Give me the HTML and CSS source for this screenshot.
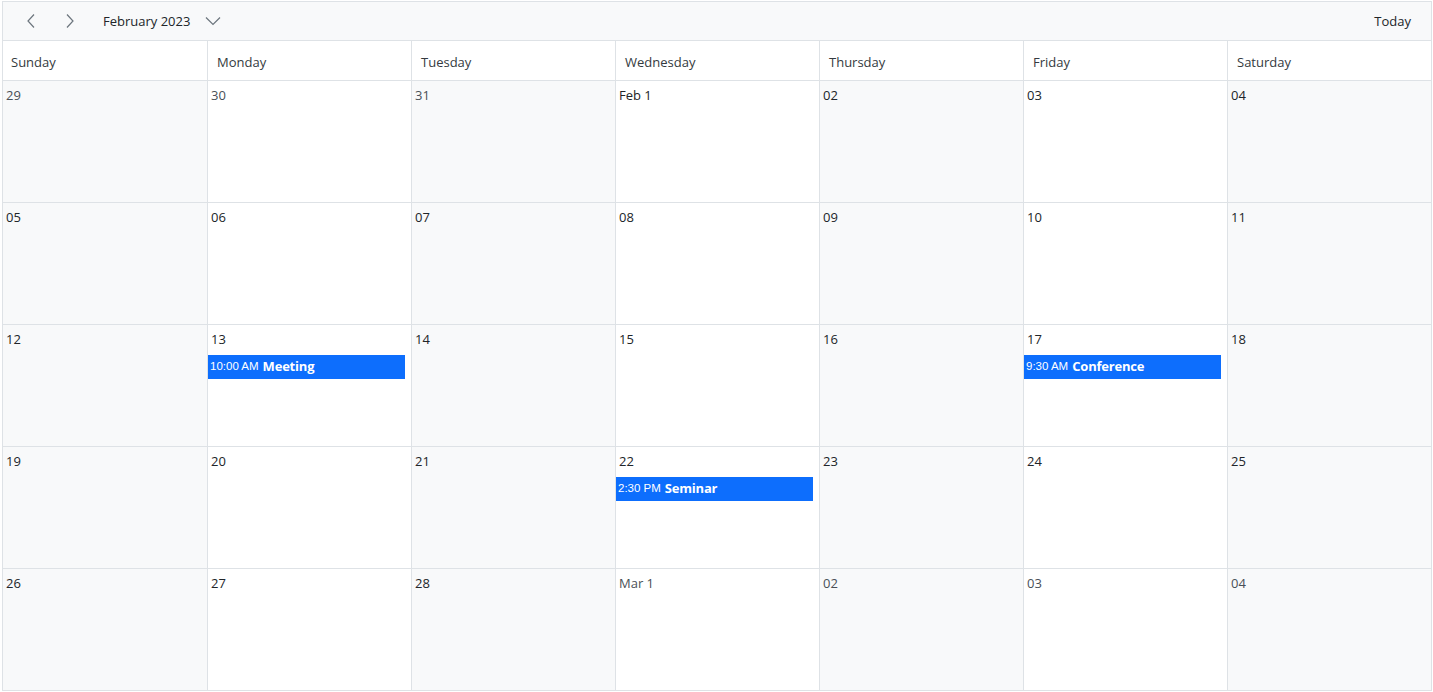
FILE: index.html
```html
<!DOCTYPE html>
<html lang="en">
<head>
<meta charset="utf-8">
<title>Calendar</title>
<link rel="stylesheet" href="styles.css">
</head>
<body>
<div class="calendar">
  <div class="toolbar">
    <button class="nav-btn" aria-label="Previous">
      <svg width="12" height="16" viewBox="0 0 12 16"><path d="M9 1.5 L3 8 L9 14.5" fill="none" stroke="#6c757d" stroke-width="1.2"/></svg>
    </button>
    <button class="nav-btn" aria-label="Next">
      <svg width="12" height="16" viewBox="0 0 12 16"><path d="M3 1.5 L9 8 L3 14.5" fill="none" stroke="#6c757d" stroke-width="1.2"/></svg>
    </button>
    <div class="title">February 2023</div>
    <button class="drop-btn" aria-label="Select month">
      <svg width="16" height="10" viewBox="0 0 16 10"><path d="M1 1.5 L8 8.5 L15 1.5" fill="none" stroke="#6c757d" stroke-width="1.2"/></svg>
    </button>
    <div class="spacer"></div>
    <button class="today-btn">Today</button>
  </div>
  <div class="header">
    <div class="hcell">Sunday</div>
    <div class="hcell">Monday</div>
    <div class="hcell">Tuesday</div>
    <div class="hcell">Wednesday</div>
    <div class="hcell">Thursday</div>
    <div class="hcell">Friday</div>
    <div class="hcell">Saturday</div>
  </div>
  <div class="grid">
    <div class="cell alt"><div class="date other">29</div></div>
    <div class="cell"><div class="date other">30</div></div>
    <div class="cell alt"><div class="date other">31</div></div>
    <div class="cell"><div class="date">Feb 1</div></div>
    <div class="cell alt"><div class="date">02</div></div>
    <div class="cell"><div class="date">03</div></div>
    <div class="cell alt"><div class="date">04</div></div>

    <div class="cell alt"><div class="date">05</div></div>
    <div class="cell"><div class="date">06</div></div>
    <div class="cell alt"><div class="date">07</div></div>
    <div class="cell"><div class="date">08</div></div>
    <div class="cell alt"><div class="date">09</div></div>
    <div class="cell"><div class="date">10</div></div>
    <div class="cell alt"><div class="date">11</div></div>

    <div class="cell alt"><div class="date">12</div></div>
    <div class="cell"><div class="date">13</div><div class="event"><span class="time">10:00 AM</span> <span class="name">Meeting</span></div></div>
    <div class="cell alt"><div class="date">14</div></div>
    <div class="cell"><div class="date">15</div></div>
    <div class="cell alt"><div class="date">16</div></div>
    <div class="cell"><div class="date">17</div><div class="event"><span class="time">9:30 AM</span> <span class="name">Conference</span></div></div>
    <div class="cell alt"><div class="date">18</div></div>

    <div class="cell alt"><div class="date">19</div></div>
    <div class="cell"><div class="date">20</div></div>
    <div class="cell alt"><div class="date">21</div></div>
    <div class="cell"><div class="date">22</div><div class="event"><span class="time">2:30 PM</span> <span class="name">Seminar</span></div></div>
    <div class="cell alt"><div class="date">23</div></div>
    <div class="cell"><div class="date">24</div></div>
    <div class="cell alt"><div class="date">25</div></div>

    <div class="cell alt"><div class="date">26</div></div>
    <div class="cell"><div class="date">27</div></div>
    <div class="cell alt"><div class="date">28</div></div>
    <div class="cell"><div class="date other">Mar 1</div></div>
    <div class="cell alt"><div class="date other">02</div></div>
    <div class="cell"><div class="date other">03</div></div>
    <div class="cell alt"><div class="date other">04</div></div>
  </div>
</div>
</body>
</html>
```
FILE: styles.css
```css
* { box-sizing: border-box; }
html, body { margin: 0; padding: 0; background: #fff; }
body {
  padding: 1px 1px 0 2px;
  font-family: "Open Sans", "Noto Sans", sans-serif;
  font-size: 13px;
  color: #212529;
}
.calendar {
  height: 690px;
  border: 1px solid #dee2e6;
  border-bottom: none;
  display: flex;
  flex-direction: column;
}
.toolbar {
  height: 39px;
  flex: none;
  background: #f8f9fa;
  border-bottom: 1px solid #dee2e6;
  display: flex;
  align-items: center;
  padding: 0 12px 0 8px;
}
button {
  background: none;
  border: none;
  padding: 0;
  font-family: inherit;
  color: inherit;
  cursor: pointer;
}
.nav-btn {
  width: 39px;
  height: 32px;
  display: flex;
  align-items: center;
  justify-content: center;
}
.title {
  margin-left: 14px;
  font-size: 13px;
  color: #212529;
}
.drop-btn {
  width: 30px;
  height: 32px;
  display: flex;
  align-items: center;
  justify-content: center;
  margin-left: 8px;
}
.spacer { flex: 1; }
.today-btn {
  font-size: 13px;
  padding: 0 8px;
  height: 32px;
}
.header {
  height: 40px;
  flex: none;
  display: grid;
  grid-template-columns: repeat(7, 1fr);
  border-bottom: 1px solid #dee2e6;
  background: #fff;
}
.hcell {
  padding: 2px 9px 0;
  display: flex;
  align-items: center;
  color: #343a40;
  border-left: 1px solid #dee2e6;
}
.hcell:first-child { border-left: none; padding-left: 8px; }
.grid {
  flex: 1;
  display: grid;
  grid-template-columns: repeat(7, 1fr);
  grid-template-rows: repeat(5, 1fr);
}
.cell {
  border-left: 1px solid #dee2e6;
  border-bottom: 1px solid #dee2e6;
  background: #fff;
  padding: 4px 6px 0 0;
  min-width: 0;
}
.cell:nth-child(7n+1) { border-left: none; }
.cell.alt { background: #f8f9fa; }
.date {
  padding-left: 3px;
  line-height: 20px;
  font-size: 13px;
  color: #212529;
}
.date.other { color: #495057; }
.event {
  margin-top: 6px;
  height: 24px;
  background: #0d6efd;
  color: #fff;
  display: flex;
  align-items: center;
  padding-left: 2px;
  padding-bottom: 3px;
  white-space: nowrap;
  overflow: hidden;
  font-family: "Liberation Sans", "Open Sans", sans-serif;
}
.event .time { font-size: 11.5px; }
.event .name { font-size: 13px; font-weight: bold; margin-left: 4px; font-family: "Open Sans", sans-serif; letter-spacing: -0.2px; }
```
